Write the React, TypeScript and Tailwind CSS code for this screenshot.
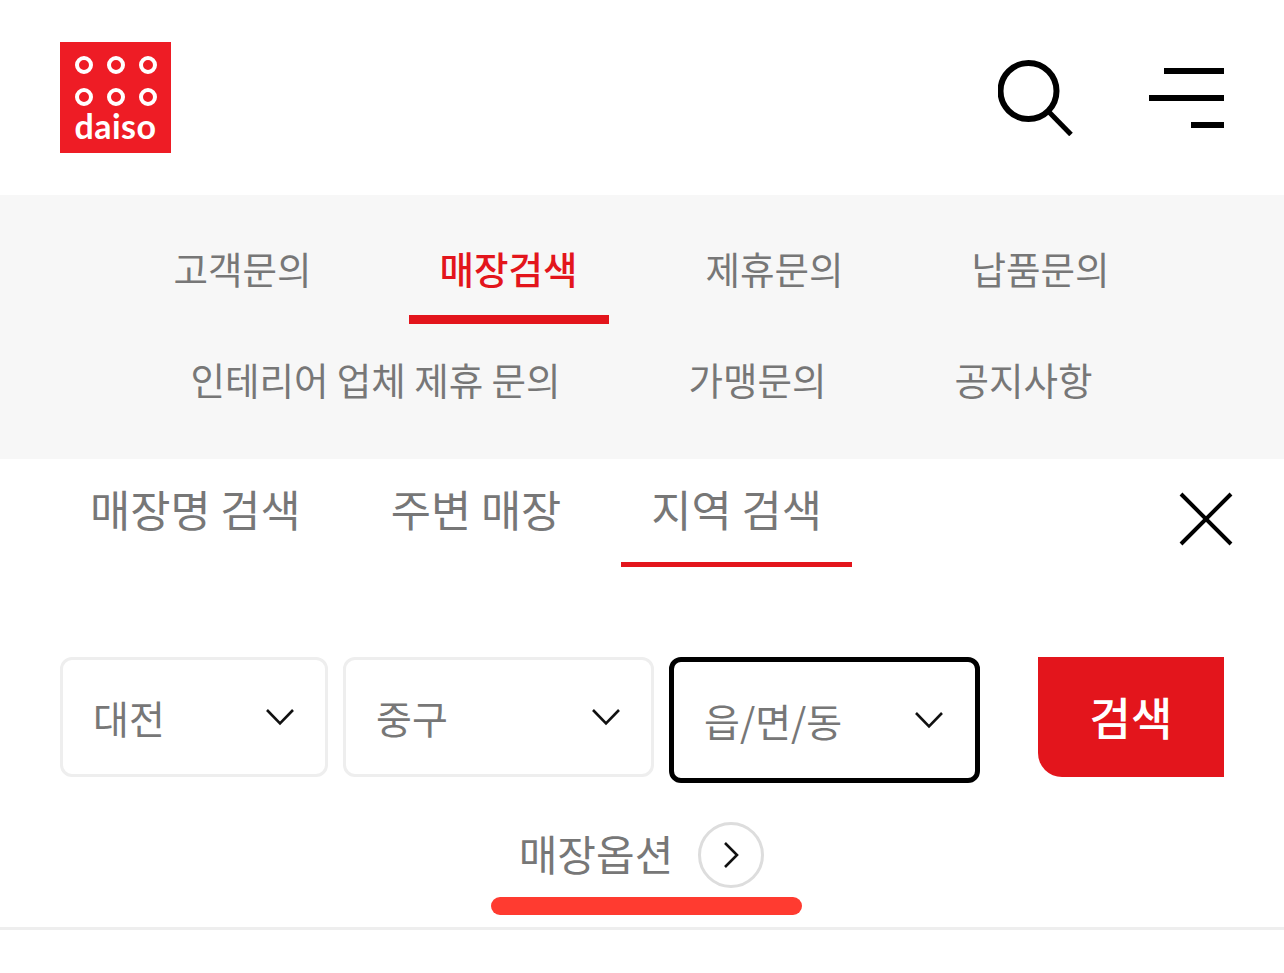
import React from "react";
import { clsx } from "clsx";

const FONT = "font-['Noto_Sans_CJK_KR','Noto_Sans',sans-serif]";

const menuRows = [
  ["고객문의", "매장검색", "제휴문의", "납품문의"],
  ["인테리어 업체 제휴 문의", "가맹문의", "공지사항"],
];

const Logo = () => (
  <div className="w-[111px] h-[111px] bg-[#ee1c25] flex flex-col items-center pt-[14px] shrink-0">
    <div className="grid grid-cols-3 gap-x-[14px] gap-y-[14px]">
      {[0, 1, 2, 3, 4, 5].map((i) => (
        <div key={i} className="w-[18px] h-[18px] rounded-full border-[4px] border-white" />
      ))}
    </div>
    <span className="font-['Lato',sans-serif] font-bold text-white text-[34px] leading-[38px] tracking-[0.5px] mt-[1px]">
      daiso
    </span>
  </div>
);

const SearchIcon = () => (
  <svg width="76" height="76" viewBox="0 0 76 76" fill="none" stroke="#000">
    <circle cx="30.5" cy="31" r="28" strokeWidth="6" />
    <path d="M51 52 L73 74.5" strokeWidth="5" />
  </svg>
);

const MenuIcon = () => (
  <div className="flex flex-col items-end gap-[21px] w-[75px]">
    <div className="h-[6px] w-[60px] bg-black" />
    <div className="h-[6px] w-[75px] bg-black" />
    <div className="h-[6px] w-[33px] bg-black" />
  </div>
);

const Chevron = () => (
  <svg width="30" height="18" viewBox="0 0 30 18" fill="none" stroke="#111" strokeWidth="2.6">
    <path d="M2 2 L15 15.5 L28 2" />
  </svg>
);

const Select = ({
  label,
  width,
  focused,
}: {
  label: string;
  width: string;
  focused?: boolean;
}) => (
  <div
    className={clsx(
      "flex items-center justify-between bg-white shrink-0",
      width,
      focused
        ? "h-[126px] border-[5px] border-black rounded-[12px] pl-[30px] pr-[31px]"
        : "h-[120px] border-[3px] border-[#eeeeee] rounded-[12px] pl-[30px] pr-[30px]",
    )}
  >
    <span className="text-[39px] leading-none text-[#777777]">{label}</span>
    <Chevron />
  </div>
);

export default function App() {
  return (
    <div className={clsx("w-[1284px] h-[973px] bg-white overflow-hidden", FONT)}>
      <header className="h-[195px] pl-[60px] pr-[60px] pt-[42px] flex items-start justify-between">
        <Logo />
        <div className="flex items-center gap-[75px] h-[111px]">
          <SearchIcon />
          <MenuIcon />
        </div>
      </header>

      <nav className="h-[264px] bg-[#f7f7f7] pt-[20px] flex flex-col">
        {menuRows.map((row, r) => (
          <div key={r} className="flex justify-center gap-x-[66px] h-[111px] pr-[1px]">
            {row.map((item) => {
              const active = item === "매장검색";
              return (
                <div
                  key={item}
                  className={clsx(
                    "h-[109px] px-[31px] pt-[6px] flex items-center border-b-[9px] text-[37.5px] leading-none whitespace-nowrap",
                    active
                      ? "border-[#e3151c] text-[#e3151c] font-medium"
                      : "border-transparent text-[#777777]",
                  )}
                >
                  {item}
                </div>
              );
            })}
          </div>
        ))}
      </nav>

      <div className="flex justify-between items-start pl-[60px] pr-[51px]">
        <div className="flex gap-x-[30px]">
          {["매장명 검색", "주변 매장", "지역 검색"].map((tab) => (
            <div
              key={tab}
              className={clsx(
                "h-[108px] px-[30px] pb-[3px] flex items-center border-b-[5px] text-[43.7px] leading-none whitespace-nowrap text-[#777777]",
                tab === "지역 검색" ? "border-[#e3151c]" : "border-transparent",
              )}
            >
              {tab}
            </div>
          ))}
        </div>
        <div className="pt-[33px]">
          <svg width="54" height="54" viewBox="0 0 54 54" fill="none" stroke="#000" strokeWidth="4">
            <path d="M2 2 L52 52 M52 2 L2 52" />
          </svg>
        </div>
      </div>

      <div className="flex items-start pl-[60px] pr-[60px] pt-[90px]">
        <div className="flex items-start gap-[15px]">
          <Select label="대전" width="w-[268px]" />
          <Select label="중구" width="w-[311px]" />
          <Select label="읍/면/동" width="w-[311px]" focused />
        </div>
        <button className="ml-auto w-[186px] h-[120px] bg-[#e3151c] rounded-bl-[24px] text-white text-[45px] font-medium leading-none pb-[2px]">
          검색
        </button>
      </div>

      <div className="flex flex-col items-center">
        <div className="flex items-center gap-[25px] mt-[39px] h-[66px] pr-[1px]">
          <span className="text-[42px] leading-none text-[#777777] pb-[4px]">매장옵션</span>
          <div className="w-[66px] h-[66px] rounded-full border-[3px] border-[#dddddd] flex items-center justify-center">
            <svg width="16" height="26" viewBox="0 0 16 26" fill="none" stroke="#111" strokeWidth="2.6">
              <path d="M2 1 L14 13 L2 25" />
            </svg>
          </div>
        </div>
        <div className="w-[311px] h-[18px] rounded-full bg-[#ff3b30] mt-[9px] ml-[9px]" />
      </div>
      <div className="h-[3px] bg-[#eeeeee] mt-[12px]" />
    </div>
  );
}
